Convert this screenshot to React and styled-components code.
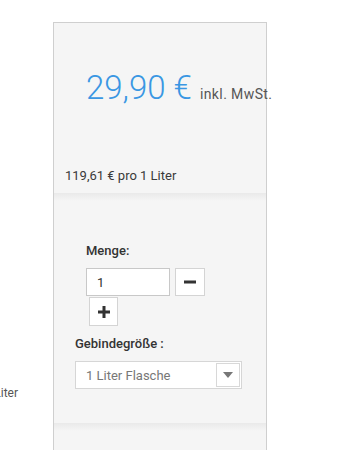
import styled, { createGlobalStyle } from "styled-components";

const Global = createGlobalStyle`
    body {
        margin: 0;
        background: #fff;
        font-family: Roboto, "Liberation Sans", sans-serif;
        color: #333;
    }
`;

const App = () => {
    return (
        <Page>
            <Global />
            <Side>
                <span>119,61 € pro 1 Liter</span>
            </Side>

            <Panel>
                <PriceSection>
                    <PriceLine>
                        <Price>29,90 €</Price>
                        <Tax>inkl. MwSt.</Tax>
                    </PriceLine>
                    <UnitPrice>119,61 € pro 1 Liter</UnitPrice>
                </PriceSection>

                <Shadow />

                <OrderSection>
                    <Label indent={32}>Menge:</Label>
                    <QtyRow>
                        <QtyInput defaultValue="1" />
                        <StepButton aria-label="weniger">
                            <svg width="12" height="12" viewBox="0 0 12 12">
                                <rect x="0" y="4.5" width="12" height="3" fill="#333" />
                            </svg>
                        </StepButton>
                    </QtyRow>
                    <StepButton plus aria-label="mehr">
                        <svg width="12" height="12" viewBox="0 0 12 12">
                            <rect x="0" y="4.5" width="12" height="3" fill="#333" />
                            <rect x="4.5" y="0" width="3" height="12" fill="#333" />
                        </svg>
                    </StepButton>

                    <Label indent={21} top={10}>Gebindegröße :</Label>
                    <Select>
                        <span>1 Liter Flasche</span>
                        <Caret>
                            <svg width="10" height="6" viewBox="0 0 10 6">
                                <path d="M0 0 L10 0 L5 6 Z" fill="#777" />
                            </svg>
                        </Caret>
                    </Select>
                </OrderSection>

                <Shadow />
                <Rest />
            </Panel>
        </Page>
    );
};

export default App;

const Page = styled.div`
    display: flex;
    align-items: flex-start;
    width: 344px;
    height: 450px;
    overflow: hidden;
`;

const Side = styled.div`
    width: 53px;
    flex-shrink: 0;
    display: flex;
    justify-content: flex-end;
    overflow: hidden;
    padding: 385px 35px 0 0;
    box-sizing: border-box;
    font-size: 12px;
    line-height: 16px;
    color: #555;
    white-space: nowrap;
`;

const Panel = styled.div`
    margin-top: 22px;
    width: 212px;
    background: #f5f5f5;
    border: 1px solid #cfcfcf;
    border-bottom: none;
    height: 440px;
`;

const PriceSection = styled.div`
    padding: 48px 11px 9px;
`;

const PriceLine = styled.div`
    display: flex;
    align-items: baseline;
    gap: 8px;
    padding-left: 21px;
    white-space: nowrap;
`;

const Price = styled.span`
    font-size: 33px;
    line-height: 34px;
    font-weight: 300;
    color: #3a97e3;
`;

const Tax = styled.span`
    font-size: 14px;
    letter-spacing: 0.4px;
    color: #555;
`;

const UnitPrice = styled.p`
    margin: 63px 0 0;
    font-size: 13px;
    line-height: 16px;
    color: #3a3a3a;
`;

const Shadow = styled.div`
    height: 8px;
    background: linear-gradient(#e9e9e9, #f5f5f5);
`;

const OrderSection = styled.div`
    padding: 42px 0 34px;
    display: flex;
    flex-direction: column;
    align-items: flex-start;
`;

const Label = styled.div`
    margin: ${({ top }) => top || 0}px 0 9px ${({ indent }) => indent}px;
    font-size: 13px;
    line-height: 16px;
    font-weight: 500;
    color: #333;
`;

const QtyRow = styled.div`
    display: flex;
    gap: 5px;
    margin-left: 32px;
`;

const QtyInput = styled.input`
    width: 84px;
    height: 28px;
    box-sizing: border-box;
    border: 1px solid #c8c8c8;
    background: #fff;
    padding: 0 10px;
    font-family: inherit;
    font-size: 13px;
    color: #333;
    outline: none;
`;

const StepButton = styled.button`
    width: ${({ plus }) => (plus ? 29 : 30)}px;
    height: ${({ plus }) => (plus ? 29 : 28)}px;
    margin: ${({ plus }) => (plus ? "1px 0 0 35px" : "0")};
    padding: 0;
    border: 1px solid #d4d4d4;
    background: #fff;
    display: flex;
    align-items: center;
    justify-content: center;
    cursor: pointer;
`;

const Select = styled.div`
    margin-left: 21px;
    width: 167px;
    height: 28px;
    box-sizing: border-box;
    border: 1px solid #d6d6d6;
    background: #fff;
    display: flex;
    align-items: center;
    justify-content: space-between;
    padding: 0 1px 0 10px;
    font-size: 13px;
    color: #777;
`;

const Caret = styled.div`
    width: 24px;
    height: 24px;
    box-sizing: border-box;
    border: 1px solid #d8d8d8;
    display: flex;
    align-items: center;
    justify-content: center;
`;

const Rest = styled.div`
    height: 40px;
`;
